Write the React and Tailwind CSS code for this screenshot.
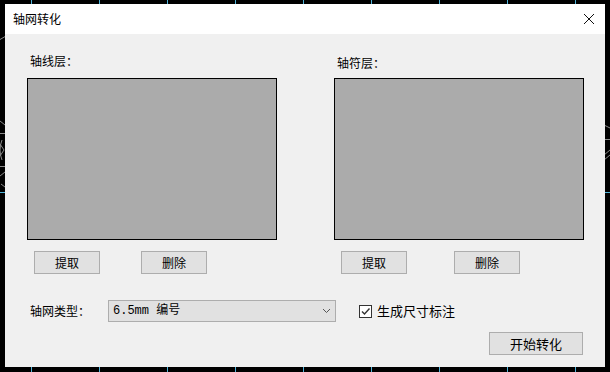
import React from "react";

const cjk = { fontFamily: '"Noto Sans CJK SC", "Liberation Sans", sans-serif' };
const mono = { fontFamily: '"Liberation Mono", "Noto Sans CJK SC", monospace' };

function Btn({ children, className = "" }) {
  return (
    <div
      className={`h-[23px] bg-[#e1e1e1] border border-[#adadad] flex items-center justify-center text-black ${className}`}
      style={cjk}
    >
      {children}
    </div>
  );
}

function Column({ label, labelClass, rightGap }) {
  return (
    <div className="w-[250px] flex flex-col">
      <div className={`h-[16px] leading-[16px] text-[12px] text-black ${labelClass}`} style={cjk}>
        {label}
      </div>
      <div className="h-[162px] bg-[#ababab] border border-black" />
      <div className="flex mt-[11px] pl-[7px]">
        <Btn className="w-[66px] text-[12px]">提取</Btn>
        <Btn className={`w-[66px] text-[12px] ${rightGap}`}>删除</Btn>
      </div>
    </div>
  );
}

export default function App() {
  const ticks = [31, 99, 167, 235, 303, 371, 439, 507, 575];
  return (
    <div className="relative w-[610px] h-[372px] bg-black overflow-hidden">
      <svg className="absolute inset-0" width="610" height="372">
        {ticks.map((x) => (
          <g key={x}>
            <line x1={x + 0.5} y1="0" x2={x + 0.5} y2="5" stroke="#4fb3d9" strokeWidth="1" />
            <line x1={x + 0.5} y1="366" x2={x + 0.5} y2="372" stroke="#4fb3d9" strokeWidth="1" />
          </g>
        ))}
        <line x1="0" y1="192.5" x2="6" y2="192.5" stroke="#4fb3d9" />
        <line x1="604" y1="192.5" x2="610" y2="192.5" stroke="#4fb3d9" />
        <line x1="0" y1="133.5" x2="6" y2="133.5" stroke="#8a8a8a" />
        <line x1="0" y1="166.5" x2="6" y2="166.5" stroke="#8a8a8a" />
        <line x1="0" y1="39.5" x2="6" y2="36" stroke="#8a8a8a" />
        <path d="M0 121 L5 125" stroke="#8a8a8a" fill="none" />
        <path d="M0 176 L5 172" stroke="#8a8a8a" fill="none" />
        <path d="M2 140 Q-2 150 2 160" stroke="#8a8a8a" fill="none" />
        <path d="M0 144 L4 150 L0 156" stroke="#8a8a8a" fill="none" />
        <path d="M1 184 L5 187" stroke="#8a8a8a" fill="none" />
        <line x1="604" y1="139.5" x2="610" y2="139.5" stroke="#8a8a8a" />
        <path d="M604 125 L610 128" stroke="#8a8a8a" fill="none" />
        <path d="M604 155 L610 150" stroke="#8a8a8a" fill="none" />
        <path d="M604 160 L610 155" stroke="#8a8a8a" fill="none" />
      </svg>

      <div className="absolute left-[5px] top-[4px] w-[600px] h-[363px] flex flex-col bg-[#f0f0f0]">
        <div className="h-[30px] bg-white flex items-center justify-between pl-[8px] pr-[10px]">
          <span className="text-[12px] text-black" style={cjk}>轴网转化</span>
          <svg width="12" height="12" viewBox="0 0 12 12">
            <path d="M1 1 L11 11 M11 1 L1 11" stroke="#111" strokeWidth="1" />
          </svg>
        </div>
        <div className="flex-1 flex flex-col pl-[22px]">
          <div className="flex gap-[57px] mt-[19px]">
            <Column label="轴线层：" labelClass="pl-[3px] mb-[9px]" rightGap="ml-[41px]" />
            <Column label="轴符层：" labelClass="pl-[3px] mt-[2px] mb-[7px]" rightGap="ml-[47px]" />
          </div>
          <div className="flex items-center mt-[26px]">
            <div className="w-[81px] pl-[3px] text-[12px] text-black" style={cjk}>
              轴网类型：
            </div>
            <div className="w-[228px] h-[22px] bg-[#e1e1e1] border border-[#adadad] flex items-center justify-between pl-[4px] pr-[4px]">
              <span className="text-[12px] text-black" style={mono}>6.5mm 编号</span>
              <svg width="9" height="6" viewBox="0 0 9 6">
                <path d="M1 1 L4.5 4.5 L8 1" stroke="#555" fill="none" strokeWidth="1" />
              </svg>
            </div>
            <div className="ml-[23px] w-[13px] h-[13px] border border-[#333] bg-white flex items-center justify-center">
              <svg width="11" height="11" viewBox="0 0 11 11">
                <path d="M2 5.5 L4.5 8 L9.5 2.5" stroke="#333" strokeWidth="1.4" fill="none" />
              </svg>
            </div>
            <span className="ml-[5px] text-[13px] text-black" style={cjk}>生成尺寸标注</span>
          </div>
          <div className="flex justify-end mt-[10px] pr-[22px]">
            <Btn className="w-[94px] text-[13px]">开始转化</Btn>
          </div>
        </div>
      </div>
    </div>
  );
}
